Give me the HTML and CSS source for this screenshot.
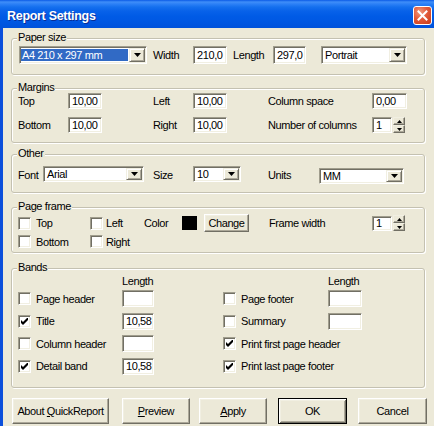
FILE: index.html
```html
<!DOCTYPE html>
<html>
<head>
<meta charset="utf-8">
<title>Report Settings</title>
<link rel="stylesheet" href="styles.css">
</head>
<body>
<div class="window">
  <div class="titlebar">
    <span class="title">Report Settings</span>
    <span class="close"><svg width="11" height="11" viewBox="0 0 11 11"><path d="M1.5 1.5 L9.5 9.5 M9.5 1.5 L1.5 9.5" stroke="#fff" stroke-width="2" stroke-linecap="square" fill="none"/></svg></span>
  </div>
  <div class="client">

    <div class="group g-paper">
      <span class="legend">Paper size</span>
      <div class="row r-paper">
        <div class="combo c-paper"><span class="ctext"><span class="hl">A4 210 x 297 mm</span></span><span class="dd"><svg width="7" height="4" viewBox="0 0 7 4"><polygon points="0,0 7,0 3.5,4" fill="#000"/></svg></span></div>
        <span class="lbl l-width">Width</span>
        <span class="edit e-w34">210,0</span>
        <span class="lbl l-width">Length</span>
        <span class="edit e-w33">297,0</span>
        <div class="combo c-orient"><span class="ctext">Portrait</span><span class="dd"><svg width="7" height="4" viewBox="0 0 7 4"><polygon points="0,0 7,0 3.5,4" fill="#000"/></svg></span></div>
      </div>
    </div>

    <div class="group g-margins">
      <span class="legend">Margins</span>
      <div class="row r-m">
        <span class="lbl l-m1">Top</span>
        <span class="edit e-w34">10,00</span>
        <span class="lbl l-m2">Left</span>
        <span class="edit e-w34">10,00</span>
        <span class="lbl l-m3">Column space</span>
        <span class="edit e-w35">0,00</span>
      </div>
      <div class="row r-m r-m2">
        <span class="lbl l-m1">Bottom</span>
        <span class="edit e-w34">10,00</span>
        <span class="lbl l-m2">Right</span>
        <span class="edit e-w34">10,00</span>
        <span class="lbl l-m3">Number of columns</span>
        <span class="edit e-w20">1</span>
        <span class="spin"><span class="sbtn"><svg width="5" height="3" viewBox="0 0 5 3"><polygon points="2.5,0 5,3 0,3" fill="#000"/></svg></span><span class="sbtn"><svg width="5" height="3" viewBox="0 0 5 3"><polygon points="0,0 5,0 2.5,3" fill="#000"/></svg></span></span>
      </div>
    </div>

    <div class="group g-other">
      <span class="legend">Other</span>
      <div class="row r-other">
        <span class="lbl l-font">Font</span>
        <div class="combo c-font"><span class="ctext">Arial</span><span class="dd"><svg width="7" height="4" viewBox="0 0 7 4"><polygon points="0,0 7,0 3.5,4" fill="#000"/></svg></span></div>
        <span class="lbl l-size">Size</span>
        <div class="combo c-size"><span class="ctext">10</span><span class="dd"><svg width="7" height="4" viewBox="0 0 7 4"><polygon points="0,0 7,0 3.5,4" fill="#000"/></svg></span></div>
        <span class="lbl l-units">Units</span>
        <div class="combo c-units"><span class="ctext">MM</span><span class="dd"><svg width="7" height="4" viewBox="0 0 7 4"><polygon points="0,0 7,0 3.5,4" fill="#000"/></svg></span></div>
      </div>
    </div>

    <div class="group g-frame">
      <span class="legend">Page frame</span>
      <div class="row r-f1">
        <span class="chk"></span><span class="clbl cl-a">Top</span>
        <span class="chk"></span><span class="clbl cl-b">Left</span>
        <span class="lbl l-color">Color</span>
        <span class="swatch"></span>
        <span class="btn b-change"><span>Change</span></span>
        <span class="lbl l-fw">Frame width</span>
        <span class="edit e-w20 e-h15">1</span>
        <span class="spin"><span class="sbtn"><svg width="5" height="3" viewBox="0 0 5 3"><polygon points="2.5,0 5,3 0,3" fill="#000"/></svg></span><span class="sbtn"><svg width="5" height="3" viewBox="0 0 5 3"><polygon points="0,0 5,0 2.5,3" fill="#000"/></svg></span></span>
      </div>
      <div class="row r-f2">
        <span class="chk"></span><span class="clbl cl-a">Bottom</span>
        <span class="chk"></span><span class="clbl cl-b">Right</span>
      </div>
    </div>

    <div class="group g-bands">
      <span class="legend">Bands</span>
      <div class="bands">
        <div class="bcol bcol-l">
          <div class="bhead">Length</div>
          <div class="brow"><span class="chk"></span><span class="clbl cl-bl">Page header</span><span class="edit e-w32 e-h17"></span></div>
          <div class="brow"><span class="chk on"><svg width="7" height="7" viewBox="0 0 7 7"><polygon points="0,2 2,4 6,0 7,0 7,2 2.5,6.5 2,7 0,5" fill="#000"/></svg></span><span class="clbl cl-bl">Title</span><span class="edit e-w32 e-h17">10,58</span></div>
          <div class="brow"><span class="chk"></span><span class="clbl cl-bl">Column header</span><span class="edit e-w32 e-h17"></span></div>
          <div class="brow"><span class="chk on"><svg width="7" height="7" viewBox="0 0 7 7"><polygon points="0,2 2,4 6,0 7,0 7,2 2.5,6.5 2,7 0,5" fill="#000"/></svg></span><span class="clbl cl-bl">Detail band</span><span class="edit e-w32 e-h17">10,58</span></div>
        </div>
        <div class="bcol bcol-r">
          <div class="bhead bhead-r">Length</div>
          <div class="brow"><span class="chk"></span><span class="clbl cl-br">Page footer</span><span class="edit e-w34 e-h17"></span></div>
          <div class="brow"><span class="chk"></span><span class="clbl cl-br">Summary</span><span class="edit e-w34 e-h17"></span></div>
          <div class="brow"><span class="chk on"><svg width="7" height="7" viewBox="0 0 7 7"><polygon points="0,2 2,4 6,0 7,0 7,2 2.5,6.5 2,7 0,5" fill="#000"/></svg></span><span class="clbl">Print first page header</span></div>
          <div class="brow"><span class="chk on"><svg width="7" height="7" viewBox="0 0 7 7"><polygon points="0,2 2,4 6,0 7,0 7,2 2.5,6.5 2,7 0,5" fill="#000"/></svg></span><span class="clbl">Print last page footer</span></div>
        </div>
      </div>
    </div>

    <div class="buttons">
      <span class="btn b-about"><span>About <u>Q</u>uickReport</span></span>
      <span class="btn b-preview"><span><u>P</u>review</span></span>
      <span class="btn b-apply"><span><u>A</u>pply</span></span>
      <span class="btn default b-ok"><span>OK</span></span>
      <span class="btn b-cancel"><span>Cancel</span></span>
    </div>

  </div>
</div>
</body>
</html>
```

FILE: styles.css
```css
* { box-sizing: border-box; }
html, body { margin: 0; padding: 0; }
body {
  width: 434px;
  height: 426px;
  overflow: hidden;
  background: #ECE9D8;
  font-family: "Liberation Sans", Arial, sans-serif;
  font-size: 11px;
  letter-spacing: -0.4px;
  color: #000;
}
.window {
  width: 434px;
  height: 426px;
  display: flex;
  flex-direction: column;
}
.titlebar {
  height: 28px;
  flex: none;
  display: flex;
  align-items: center;
  padding: 4px 0 0 7px;
  background: linear-gradient(180deg, #0B5BE6 0px, #3F8EF8 2px, #2C80F6 4px, #1570EE 7px, #0862E9 11px, #005BE6 16px, #0057E2 22px, #0052DB 28px);
}
.title {
  color: #fff;
  font-weight: bold;
  font-size: 12.5px;
  letter-spacing: -0.3px;
  text-shadow: 1px 1px 0 #0A2E96;
}
.close {
  margin-left: auto;
  margin-right: 2px;
  align-self: flex-start;
  margin-top: 2px;
  width: 19px;
  height: 19px;
  border: 1px solid #fff;
  border-radius: 3px;
  background: radial-gradient(circle at 35% 30%, #F09A7E 0%, #E25A3A 45%, #C63A18 100%);
  display: flex;
  align-items: center;
  justify-content: center;
}
.client {
  flex: 1;
  border-left: 3px solid #0B4FDB;
  padding: 0 0 0 8px;
}
.group {
  position: relative;
  width: 414px;
  border: 1px solid #C4C1B1;
  border-radius: 3px;
  box-shadow: inset 1px 1px 0 #fff, 1px 1px 0 #fff;
}
.legend {
  position: absolute;
  left: 5px;
  top: -8px;
  padding: 0 1px;
  line-height: 13px;
  background: #ECE9D8;
}
.g-paper { margin-top: 10px; height: 37px; padding: 7px 0 0 7px; }
.g-margins { margin-top: 13px; height: 55px; padding: 4px 0 0 6px; }
.g-other { margin-top: 11px; height: 39px; padding: 11px 0 0 6px; }
.g-frame { margin-top: 14px; height: 46px; padding: 6px 0 0 6px; }
.g-bands { margin-top: 15px; height: 120px; padding: 6px 0 0 6px; }

.row { display: flex; align-items: center; }
.r-paper { height: 18px; }
.r-m { height: 16px; }
.r-m2 { margin-top: 8px; }
.r-other { height: 18px; }
.r-f1 { height: 18px; }
.r-f2 { height: 13px; margin-top: 3px; }

.lbl { flex: none; white-space: nowrap; }
.l-width { margin-left: 6px; width: 40px; }
.l-m1 { width: 50px; }
.l-m2 { margin-left: 51px; width: 40px; }
.l-m3 { margin-left: 41px; width: 104px; }
.l-font { width: 25px; }
.l-size { margin-left: 9px; width: 40px; }
.l-units { margin-left: 27px; width: 51px; }
.l-color { width: 38px; }
.l-fw { margin-left: 20px; width: 103px; }

.edit {
  flex: none;
  height: 16px;
  background: #fff;
  border: 1px solid;
  border-color: #A09D8D #fff #fff #A09D8D;
  box-shadow: inset 1px 1px 0 #716F64, inset -1px -1px 0 #F1EFE2;
  padding: 0 0 1px 3px;
  display: flex;
  align-items: center;
  white-space: nowrap;
}
.r-paper .edit { height: 18px; }
.e-w20 { width: 20px; }
.e-w32 { width: 32px; }
.e-w33 { width: 33px; }
.e-w34 { width: 34px; }
.e-w35 { width: 35px; }
.e-h15 { height: 15px; }
.e-h17 { height: 17px; }

.combo {
  flex: none;
  display: flex;
  height: 16px;
  background: #fff;
  border: 1px solid;
  border-color: #A09D8D #fff #fff #A09D8D;
  box-shadow: inset 1px 1px 0 #716F64, inset -1px -1px 0 #F1EFE2;
  padding: 1px;
}
.ctext {
  flex: 1;
  display: flex;
  align-items: center;
  padding-left: 2px;
  white-space: nowrap;
  overflow: hidden;
}
.c-paper { width: 128px; height: 18px; }
.c-paper .ctext { padding: 1px 1px 1px 0; }
.hl {
  flex: 1;
  align-self: stretch;
  display: flex;
  align-items: center;
  padding-left: 1px;
  background: #316AC5;
  color: #fff;
}
.c-orient { width: 86px; height: 18px; margin-left: 15px; }
.c-font { width: 101px; align-self: flex-start; }
.c-size { width: 48px; align-self: flex-start; }
.c-units { width: 85px; align-self: flex-end; }
.dd {
  flex: none;
  width: 16px;
  display: flex;
  align-items: center;
  justify-content: center;
  background: #ECE9D8;
  border: 1px solid;
  border-color: #F1EFE2 #716F64 #716F64 #F1EFE2;
  box-shadow: inset 1px 1px 0 #fff, inset -1px -1px 0 #ACA899;
}

.spin {
  flex: none;
  width: 12px;
  height: 16px;
  margin-left: 1px;
  display: flex;
  flex-direction: column;
}
.sbtn {
  flex: 1;
  display: flex;
  align-items: center;
  justify-content: center;
  background: #ECE9D8;
  border: 1px solid;
  border-color: #F1EFE2 #716F64 #716F64 #F1EFE2;
  box-shadow: inset -1px -1px 0 #ACA899;
}

.chk {
  flex: none;
  width: 13px;
  height: 13px;
  background: #fff;
  border: 1px solid;
  border-color: #A09D8D #fff #fff #A09D8D;
  box-shadow: inset 1px 1px 0 #716F64, inset -1px -1px 0 #F1EFE2;
  display: flex;
  align-items: center;
  justify-content: center;
}
.clbl { flex: none; white-space: nowrap; margin-left: 5px; }
.cl-a { width: 54px; }
.cl-b { width: 38px; margin-left: 3px; }
.cl-bl { width: 86px; }
.cl-br { width: 87px; }

.swatch { flex: none; width: 15px; height: 14px; background: #000; }

.btn {
  flex: none;
  display: flex;
  align-items: center;
  justify-content: center;
  white-space: nowrap;
  background: #ECE9D8;
  border: 1px solid;
  border-color: #fff #716F64 #716F64 #fff;
  box-shadow: inset -1px -1px 0 #ACA899, inset 1px 1px 0 #F1EFE2;
}
.btn.default {
  border: 1px solid #000;
  box-shadow: inset 1px 1px 0 #fff, inset -1px -1px 0 #716F64, inset 2px 2px 0 #F1EFE2, inset -2px -2px 0 #ACA899;
}
.b-change { width: 45px; height: 18px; margin-left: 7px; }

.bands { display: flex; }
.bcol { flex: none; display: flex; flex-direction: column; }
.bcol-l { width: 205px; }
.bhead { height: 13px; line-height: 13px; padding-left: 104px; margin-bottom: 2px; }
.bhead-r { padding-left: 105px; }
.brow { height: 17px; display: flex; align-items: center; margin-bottom: 5.5px; }

.buttons {
  display: flex;
  margin-top: 10px;
  padding-left: 1px;
}
.buttons .btn { height: 26px; }
.b-about { width: 97px; }
.b-preview { width: 68px; margin-left: 13px; }
.b-apply { width: 68px; margin-left: 9px; }
.b-ok { width: 69px; margin-left: 11px; }
.b-cancel { width: 69px; margin-left: 11px; }
u { text-decoration: underline; text-underline-offset: 1px; }
```
